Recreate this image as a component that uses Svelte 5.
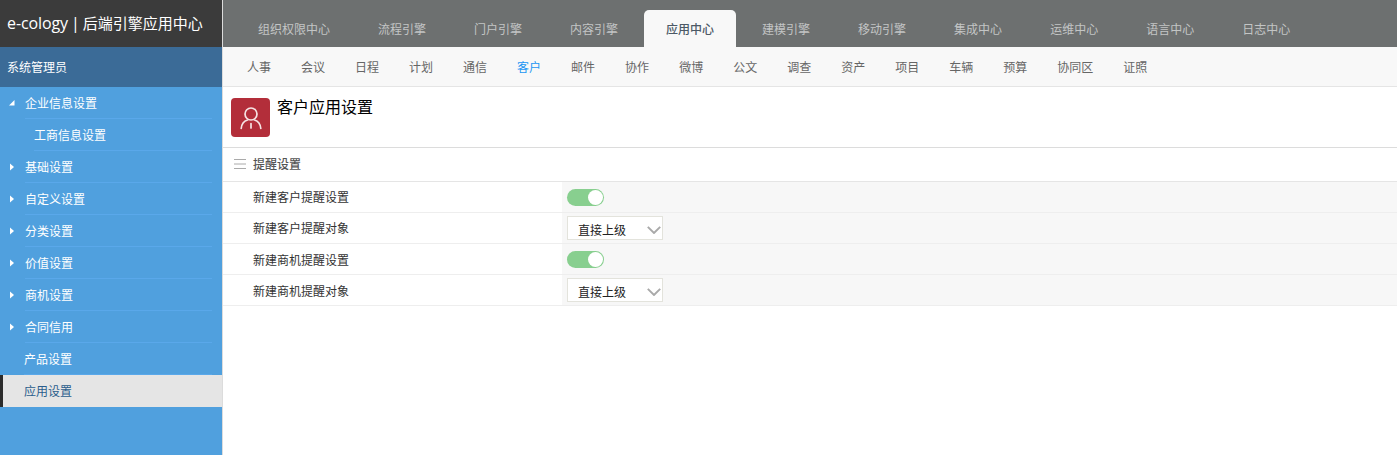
<script>
  const tabs = ['组织权限中心','流程引擎','门户引擎','内容引擎','应用中心','建模引擎','移动引擎','集成中心','运维中心','语言中心','日志中心'];
  const subs = ['人事','会议','日程','计划','通信','客户','邮件','协作','微博','公文','调查','资产','项目','车辆','预算','协同区','证照'];
  const menu = [
    { t:'企业信息设置', k:'open' },
    { t:'工商信息设置', k:'child' },
    { t:'基础设置', k:'closed' },
    { t:'自定义设置', k:'closed' },
    { t:'分类设置', k:'closed' },
    { t:'价值设置', k:'closed' },
    { t:'商机设置', k:'closed' },
    { t:'合同信用', k:'closed' },
    { t:'产品设置', k:'leaf' },
    { t:'应用设置', k:'active' }
  ];
  const rows = [
    { l:'新建客户提醒设置', s:true },
    { l:'新建客户提醒对象' },
    { l:'新建商机提醒设置', s:true },
    { l:'新建商机提醒对象' }
  ];
</script>

<div class="page">
  <aside class="side">
    <div class="brand"><span class="latin">e-cology |</span> 后端引擎应用中心</div>
    <div class="admin">系统管理员</div>
    <nav class="menu">
      {#each menu as m}
        <div class="item {m.k}">
          {#if m.k === 'open'}
            <svg class="arrow" width="6" height="6" viewBox="0 0 6 6"><path d="M0 5.5L5.5 5.5L5.5 0Z" fill="#fff"/></svg>
          {:else if m.k === 'closed'}
            <svg class="arrow" width="6" height="8" viewBox="0 0 6 8"><path d="M1 0.5L5 4L1 7.5Z" fill="#fff"/></svg>
          {/if}
          <span class="label">{m.t}</span>
        </div>
      {/each}
    </nav>
  </aside>

  <main class="main">
    <div class="tabs">
      {#each tabs as t}
        <div class="tab" class:on={t === '应用中心'}>{t}</div>
      {/each}
    </div>
    <div class="subs">
      {#each subs as s}
        <div class="sub" class:on={s === '客户'}>{s}</div>
      {/each}
    </div>
    <div class="title">
      <div class="badge">
        <svg width="24" height="24" viewBox="0 0 24 24" fill="none" stroke="#f6e4e4" stroke-width="1.700" stroke-linecap="round">
          <circle cx="12" cy="8" r="6"/>
          <path d="M2.200 22.500c.4-4.500 3-7.500 6.300-8.500M21.800 22.500c-.4-4.500-3-7.500-6.300-8.500M12 17.500v4.500"/>
        </svg>
      </div>
      <h1>客户应用设置</h1>
    </div>
    <div class="section">
      <svg width="12" height="10" viewBox="0 0 12 10" stroke="#aaa" stroke-width="1"><path d="M0 .5H12M0 5H12M0 9.500H12"/></svg>
      <span>提醒设置</span>
    </div>
    <div class="rows">
      {#each rows as r}
        <div class="row">
          <div class="name">{r.l}</div>
          <div class="val">
            {#if r.s}
              <div class="switch"><i></i></div>
            {:else}
              <div class="select">
                <span>直接上级</span>
                <svg width="14" height="8" viewBox="0 0 14 8" fill="none" stroke="#a9a9a9" stroke-width="1.900"><path d="M.8 .8L7 7L13.200 .8"/></svg>
              </div>
            {/if}
          </div>
        </div>
      {/each}
    </div>
  </main>
</div>

<style>
  :global(body) { margin: 0; background: #fff; }
  .page {
    display: flex;
    height: 455px;
    overflow: hidden;
    font: 12px/1 "Noto Sans CJK SC", "Liberation Sans", sans-serif;
  }
  .side {
    width: 222px;
    flex: none;
    background: #50a0de;
    border-right: 1px solid #dcdcdc;
  }
  .brand {
    height: 47px;
    box-sizing: border-box;
    padding: 15px 0 0 7px;
    background: #3b3b3b;
    color: #fff;
    font: 15px/17px "Open Sans", "Noto Sans CJK SC", sans-serif;
    white-space: nowrap;
    word-spacing: -1px;
  }
  .latin { font-size: 16px; letter-spacing: -0.1px; }
  .admin {
    height: 40px;
    line-height: 40px;
    padding-left: 7px;
    background: #3b6b97;
    color: #fff;
  }
  .item {
    position: relative;
    height: 32px;
    line-height: 32px;
    color: #fff;
  }
  .label {
    display: block;
    box-sizing: border-box;
    height: 32px;
    margin: 0 10px 0 25px;
    padding-bottom: 1px;
    border-bottom: 1px solid #5aa8ea;
  }
  .child .label { margin-left: 34px; }
  .leaf .label { margin-left: 24px; }
  .active { background: #e5e5e5; border-left: 3px solid #2b2b2b; }
  .active .label { margin-left: 21px; border-bottom: none; color: #2a5d8c; }
  .arrow { position: absolute; left: 9px; top: 12px; }
  .open .arrow { top: 13px; }
  .main { flex: 1; min-width: 0; }
  .tabs {
    height: 47px;
    box-sizing: border-box;
    padding: 10px 0 0 11px;
    display: flex;
    background: #6d7070;
  }
  .tab {
    height: 37px;
    line-height: 38px;
    padding: 0 22px;
    margin: 0 2px;
    color: #c3c5c5;
    white-space: nowrap;
  }
  .tab.on {
    background: #f8f8f8;
    border-radius: 5px 5px 0 0;
    color: #4c5966;
    font-weight: 500;
  }
  .subs {
    height: 40px;
    box-sizing: border-box;
    padding-left: 24px;
    display: flex;
    gap: 30px;
    line-height: 39px;
    background: #f8f8f8;
    border-bottom: 1px solid #e5e5e5;
    color: #666;
  }
  .sub.on { color: #2196f3; }
  .title {
    height: 61px;
    box-sizing: border-box;
    padding: 11px 0 0 8px;
    display: flex;
    gap: 7px;
    border-bottom: 1px solid #dcdcdc;
  }
  .badge {
    width: 39px;
    height: 39px;
    border-radius: 4px;
    background: #b32e3a;
    display: flex;
    align-items: center;
    justify-content: center;
  }
  h1 {
    margin: 0;
    font-size: 16px;
    font-weight: 400;
    line-height: 16px;
    color: #000;
  }
  .section {
    height: 34px;
    box-sizing: border-box;
    padding: 0 0 2px 11px;
    display: flex;
    align-items: center;
    gap: 7px;
    border-bottom: 1px solid #e5e5e5;
    color: #555;
    font-weight: 500;
  }
  .row {
    height: 31px;
    box-sizing: border-box;
    display: flex;
    border-bottom: 1px solid #eee;
  }
  .name {
    width: 339px;
    flex: none;
    box-sizing: border-box;
    padding-left: 30px;
    line-height: 30px;
    color: #333;
  }
  .row:nth-child(n+3) .name { line-height: 32px; }
  .val {
    flex: 1;
    box-sizing: border-box;
    padding-left: 5px;
    display: flex;
    align-items: center;
    background: #f7f7f7;
  }
  .switch {
    width: 37px;
    height: 17px;
    box-sizing: border-box;
    border-radius: 9px;
    background: #88cf8f;
    display: flex;
    justify-content: flex-end;
    padding: 1px;
  }
  .switch i {
    width: 15px;
    height: 15px;
    border-radius: 50%;
    background: #fff;
  }
  .select {
    width: 96px;
    height: 24px;
    box-sizing: border-box;
    border: 1px solid #e3e3dc;
    background: #fff;
    color: #222;
    padding: 0 0 0 10px;
    display: flex;
    align-items: center;
    justify-content: space-between;
  }
  .select svg { margin-right: 1px; margin-top: 3px; }
  .select span { padding-top: 3px; }
</style>
